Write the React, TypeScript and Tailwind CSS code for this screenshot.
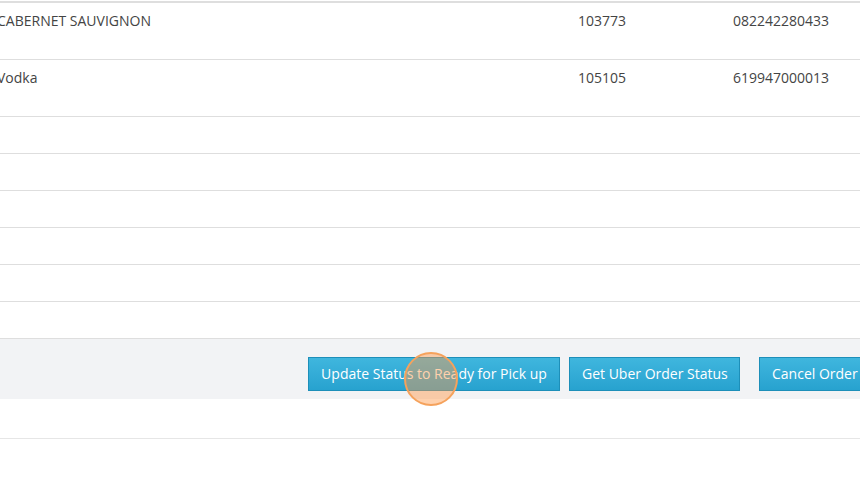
const rows = [
  { name: 'CABERNET SAUVIGNON', sku: '103773', upc: '082242280433' },
  { name: 'Vodka', sku: '105105', upc: '619947000013' },
];

const emptyRows = 6;

function ActionButton({ label, className = '' }: { label: string; className?: string }) {
  return (
    <button
      type="button"
      className={`h-[34px] shrink-0 border border-[#1d8fb9] bg-gradient-to-b from-[#3fb6de] to-[#27a2cf] px-[12px] pb-[1px] text-[14px] text-white ${className}`}
    >
      {label}
    </button>
  );
}

export default function App() {
  return (
    <div className="relative h-[481px] w-[860px] overflow-hidden whitespace-nowrap bg-white font-['Open_Sans',sans-serif] text-[14px] text-[#444]">
      <div className="mt-[1px] border-t-2 border-[#dedede]">
        {rows.map((r) => (
          <div
            key={r.sku}
            className="ml-[-3px] grid h-[57px] grid-cols-[581px_155px_1fr] border-b border-[#dedede] pt-[8px] leading-[20px]"
          >
            <span>{r.name}</span>
            <span>{r.sku}</span>
            <span>{r.upc}</span>
          </div>
        ))}
        {Array.from({ length: emptyRows }).map((_, i) => (
          <div key={i} className="h-[37px] border-b border-[#dedede]" />
        ))}
      </div>

      <div className="flex h-[60px] items-start bg-[#f2f3f5] pl-[308px] pt-[18px]">
        <ActionButton label="Update Status to Ready for Pick up" className="w-[252px]" />
        <ActionButton label="Get Uber Order Status" className="ml-[9px] w-[171px]" />
        <ActionButton label="Cancel Order" className="ml-[19px]" />
      </div>

      <div className="h-[40px] border-b border-[#e6e6e6]" />

      {/* click highlight */}
      <div className="pointer-events-none absolute left-[404px] top-[352px] h-[54px] w-[54px] rounded-full border-2 border-[#f5a25c] bg-[#ff9a4a]/45" />
    </div>
  );
}
